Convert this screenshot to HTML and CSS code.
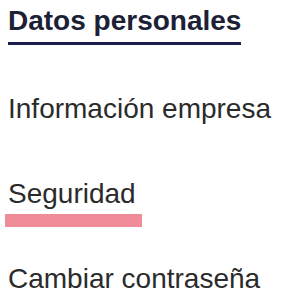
FILE: index.html
```html
<!DOCTYPE html>
<html lang="es">
<head>
<meta charset="utf-8">
<title>Menú</title>
<link rel="stylesheet" href="styles.css">
</head>
<body>
<nav class="menu">
  <h2 class="menu-title">Datos personales</h2>
  <ul class="menu-list">
    <li class="menu-item">Información empresa</li>
    <li class="menu-item menu-item--active">Seguridad</li>
    <li class="menu-item">Cambiar contraseña</li>
  </ul>
</nav>
</body>
</html>
```
FILE: styles.css
```css
html, body {
  margin: 0;
  padding: 0;
  background: #ffffff;
}
body {
  font-family: "Liberation Sans", Arial, sans-serif;
  font-size: 28px;
  line-height: 32px;
}
.menu {
  padding: 5px 8px 0 8px;
}
.menu-title {
  display: inline-block;
  margin: 0;
  font-size: 28px;
  font-weight: bold;
  line-height: 32px;
  color: #1c2136;
  padding-bottom: 5px;
  border-bottom: 3px solid #1b1d4a;
}
.menu-list {
  list-style: none;
  margin: 48px 0 0 0;
  padding: 0;
  display: flex;
  flex-direction: column;
  gap: 53px;
}
.menu-item {
  color: #2b2b2b;
  line-height: 32px;
}
.menu-item--active {
  position: relative;
  align-self: flex-start;
}
.menu-item--active::after {
  content: "";
  position: absolute;
  left: -3px;
  right: -6px;
  top: 36px;
  height: 13px;
  background: #f08c97;
}
```
